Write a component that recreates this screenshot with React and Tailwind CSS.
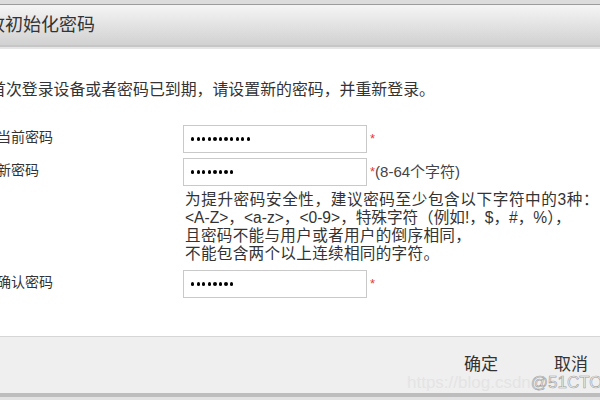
import React from 'react';

const font = { fontFamily: '"Liberation Sans", "Noto Sans CJK SC", sans-serif' };

function Dots({ count }) {
  return (
    <div className="flex items-center gap-[2.4px] pl-[7px]">
      {Array.from({ length: count }).map((_, i) => (
        <span key={i} className="block w-[3.2px] h-[3.2px] rounded-full bg-black" />
      ))}
    </div>
  );
}

function Row({ label, dots, extra, className }) {
  return (
    <div className={`flex items-start ${className || ''}`}>
      <div className="w-[186px] -ml-[3px] text-[14px] leading-[20px] text-[#333] pt-[2px]">{label}</div>
      <div className="w-[184px] h-[28px] border border-[#c9c9c9] bg-white flex items-center">
        <Dots count={dots} />
      </div>
      <span className="text-[13px] leading-none text-[#e43a3a] ml-[3px] mt-[7px]">*</span>
      {extra && <span className="text-[15px] leading-[20px] text-[#444] mt-[4px]">{extra}</span>}
    </div>
  );
}

export default function App() {
  return (
    <div className="w-[600px] h-[400px] overflow-hidden bg-white flex flex-col relative" style={font}>
      {/* Title bar */}
      <div className="h-[4px] bg-[#dcdcdc] shrink-0" />
      <div className="h-[41px] shrink-0 border-t border-[#9c9c9c] bg-gradient-to-b from-[#f5f5f5] to-[#d1d1d1] flex items-center">
        <span className="-ml-[13px] text-[18px] text-[#333] leading-none">改初始化密码</span>
      </div>
      <div className="h-[2px] bg-[#c6c6c6] shrink-0" />
      <div className="h-[2px] bg-[#e6e6e6] shrink-0" />

      {/* Body */}
      <div className="flex-1 flex flex-col">
        <p className="mt-[31px] -ml-[10px] text-[15.9px] leading-[20px] text-[#333] whitespace-nowrap">
          首次登录设备或者密码已到期，请设置新的密码，并重新登录。
        </p>

        <Row label="当前密码" dots={11} className="mt-[25px]" />
        <Row label="新密码" dots={8} extra="(8-64个字符)" className="mt-[5px]" />

        <div className="ml-[185px] mt-[5px] text-[15.6px] leading-[18px] text-[#333] whitespace-nowrap">
          <p className="tracking-[0.6px]">为提升密码安全性，建议密码至少包含以下字符中的3种：</p>
          <p>&lt;A-Z&gt;，&lt;a-z&gt;，&lt;0-9&gt;，特殊字符（例如!，$，#，%），</p>
          <p className="tracking-[0.3px]">且密码不能与用户或者用户的倒序相同，</p>
          <p className="tracking-[0.3px]">不能包含两个以上连续相同的字符。</p>
        </div>

        <Row label="确认密码" dots={8} className="mt-[7px]" />
      </div>

      {/* Footer */}
      <div className="h-[57px] shrink-0 border-t border-[#d6d6d6] bg-[#efefef] flex items-center justify-end pr-[12px] gap-[56px]">
        <button className="text-[17px] text-[#333] leading-none mt-[-2px]">确定</button>
        <button className="text-[17px] text-[#333] leading-none mt-[-2px]">取消</button>
      </div>
      <div className="h-[4px] bg-[#bdbdbd] shrink-0" />
      <div className="h-[3px] bg-[#e2e2e2] shrink-0" />

      {/* watermark */}
      <div className="absolute left-[407px] top-[373px] text-[17px] leading-[20px] whitespace-nowrap">
        <span className="text-[#e4e4e4]">https://blog.csdn</span>
        <span className="text-[#f8f8f8]" style={{ WebkitTextStroke: '0.6px #9a9a9a' }}>@51CTO</span>
      </div>
    </div>
  );
}
